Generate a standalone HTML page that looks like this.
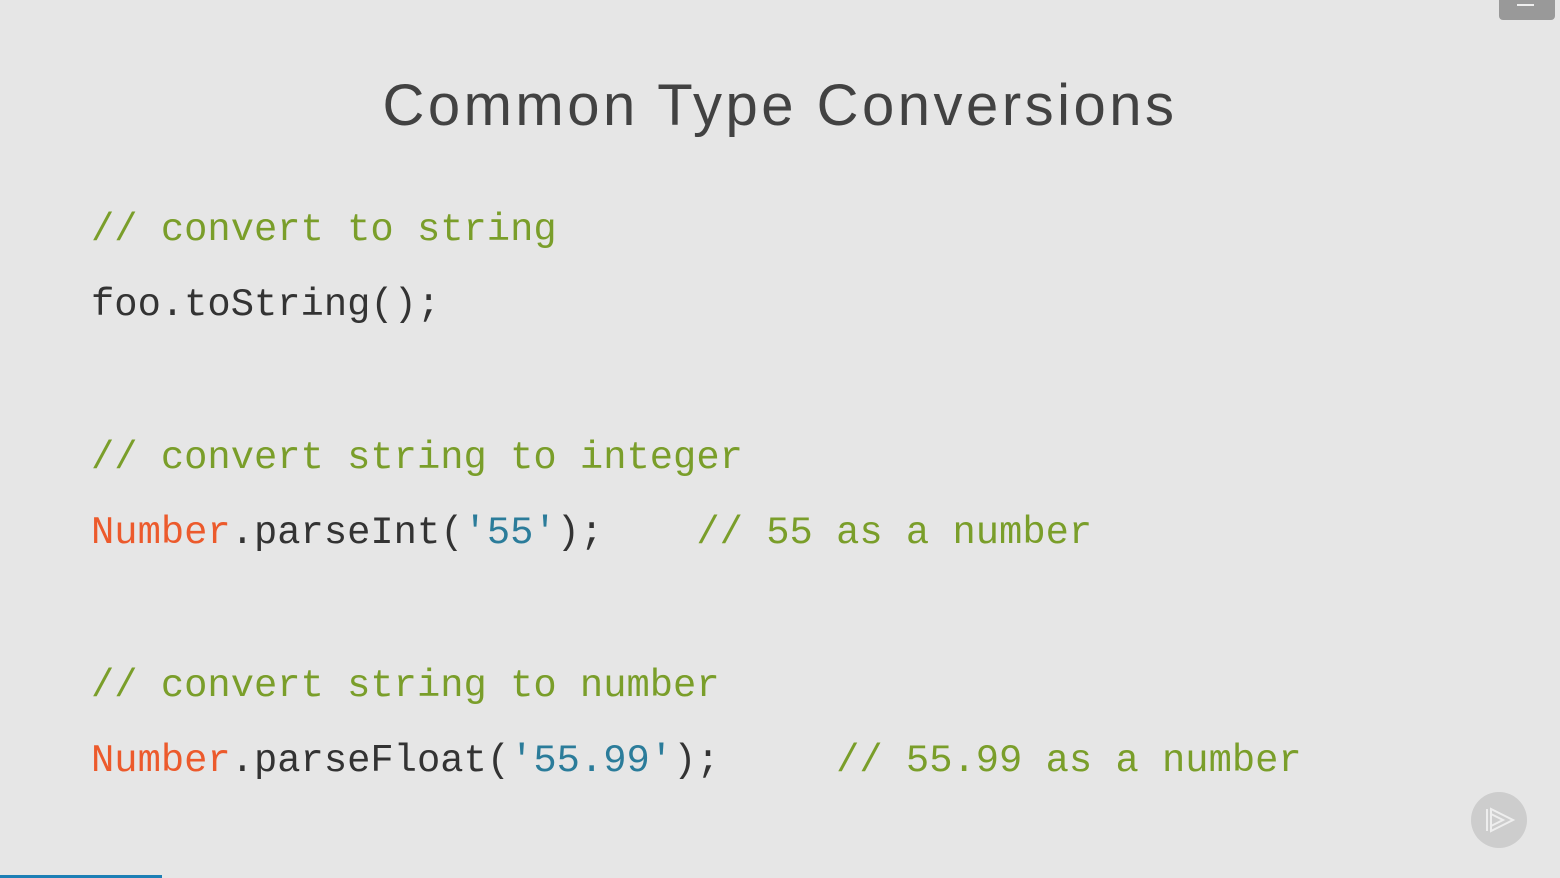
<!DOCTYPE html>
<html><head><meta charset="utf-8"><style>
html,body{margin:0;padding:0}
body{width:1560px;height:878px;background:#e6e6e6;position:relative;overflow:hidden}
.t{position:absolute;left:0;width:1560px;top:66px;text-align:center;font-family:"Liberation Sans",sans-serif;font-size:58px;font-weight:normal;color:#424242;letter-spacing:3.5px;line-height:80px}
.l{position:absolute;left:91px;font-family:"Liberation Mono",monospace;font-size:38.8px;line-height:50px;white-space:pre;color:#333}
.c{color:#7a9e2a}.o{color:#ec5a2c}.s{color:#2b7c9a}
</style></head><body>
<div class="t">Common Type Conversions</div>
<div class="l c" style="top:205px">// convert to string</div>
<div class="l" style="top:280px">foo.toString();</div>
<div class="l c" style="top:433px">// convert string to integer</div>
<div class="l" style="top:508px"><span class="o">Number</span>.parseInt(<span class="s">'55'</span>);    <span class="c">// 55 as a number</span></div>
<div class="l c" style="top:661px">// convert string to number</div>
<div class="l" style="top:736px"><span class="o">Number</span>.parseFloat(<span class="s">'55.99'</span>);     <span class="c">// 55.99 as a number</span></div>
<div style="position:absolute;left:1499px;top:-6px;width:56px;height:26px;background:#999;border-radius:4px"></div>
<div style="position:absolute;left:1517px;top:4px;width:17px;height:2px;background:#eee"></div>
<div style="position:absolute;left:1471px;top:792px;width:56px;height:56px;border-radius:50%;background:#cdcdcd"></div>
<svg style="position:absolute;left:1471px;top:792px" width="56" height="56" viewBox="0 0 56 56">
<path d="M16 17 L16 39 M20 17 L20 39 L42 28 Z M20 22 L32 28 L20 34" fill="none" stroke="#eee" stroke-width="2"/>
</svg>
<div style="position:absolute;left:0;top:875px;width:162px;height:3px;background:#1d7fb5"></div>
</body></html>
